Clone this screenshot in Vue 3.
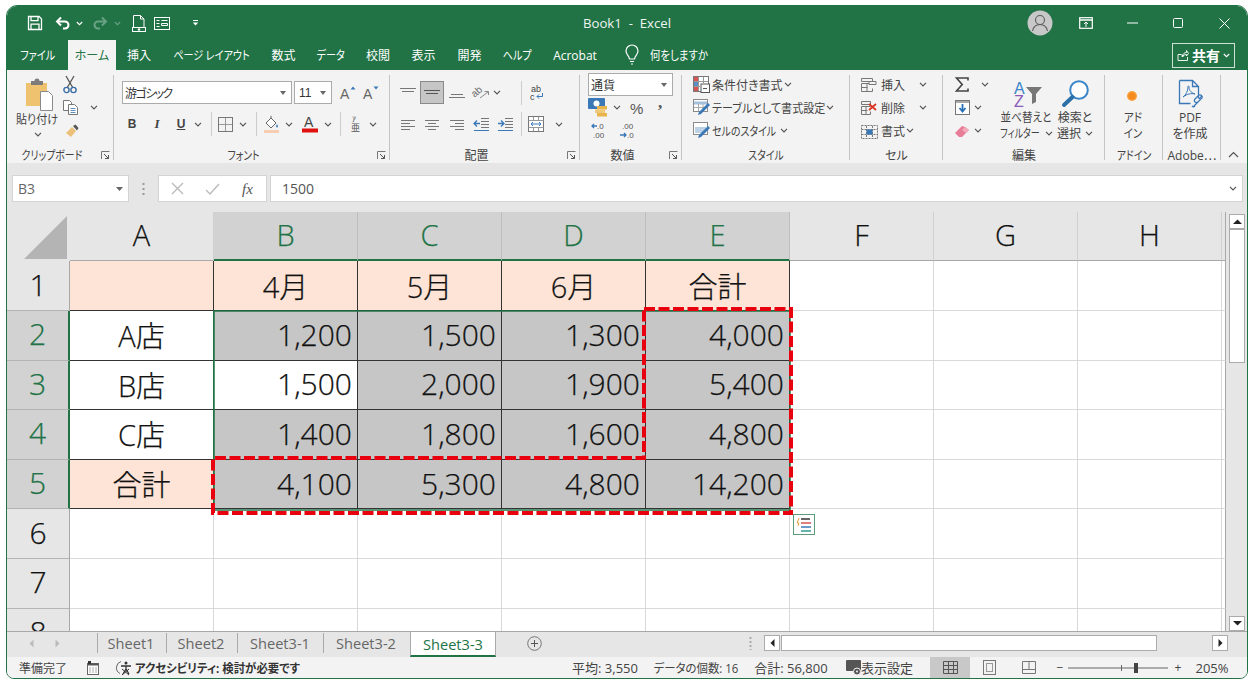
<script setup>
import { h } from 'vue'

const ln = (arr, c = '#777') => arr.map(([a, b, y]) => `<path d="M${a} ${y + 0.5}H${b}" stroke="${c}" fill="none"/>`).join('')
const T = (x, y, s, t, c = '#555', extra = '') => `<text x="${x}" y="${y}" font-size="${s}" fill="${c}" font-family="Liberation Sans, sans-serif" ${extra}>${t}</text>`
const blue = '#3b78b8'
const icons = {
  save: [16, 16, '<path d="M1.5 1.5h10.6l2.4 2.4v10.6h-13z M4 1.5v4.2h7V1.5 M4 14.5V9.2h8v5.3" fill="none" stroke="#fff" stroke-width="1.3"/>'],
  undo: [16, 14, '<path d="M6 1.5 2 5.5l4 4" fill="none" stroke="#fff" stroke-width="2"/><path d="M2.5 5.5H10a3.4 3.4 0 0 1 0 7H8" fill="none" stroke="#fff" stroke-width="2"/>'],
  redo: [16, 14, '<path d="M10 1.5l4 4-4 4" fill="none" stroke="#68a184" stroke-width="2"/><path d="M13.5 5.5H6a3.4 3.4 0 0 0 0 7h2" fill="none" stroke="#68a184" stroke-width="2"/>'],
  chW: [7, 5, '<path d="M.8 1l2.7 2.7L6.2 1" fill="none" stroke="#fff" stroke-width="1.1"/>'],
  chD: [7, 5, '<path d="M.8 1l2.7 2.7L6.2 1" fill="none" stroke="#68a184" stroke-width="1.1"/>'],
  ch: [8, 5, '<path d="M1 .8l3 3 3-3" fill="none" stroke="#555" stroke-width="1.2"/>'],
  prev: [14, 17, '<path d="M1.5 12V.5h7l3.5 3.5v8M8.5.5v3.5H12" fill="none" stroke="#fff"/><rect x=".5" y="12.5" width="13" height="4" fill="none" stroke="#fff"/><circle cx="7" cy="14.5" r="1.2" fill="#fff"/>'],
  form: [16, 13, '<rect x=".5" y=".5" width="15" height="12" fill="none" stroke="#fff"/><path d="M2.5 3.5h3M7.5 3.5h6M2.5 6.5h3M7.5 6.5h6v2h-6zM2.5 9.5h3" stroke="#fff" fill="none"/>'],
  cust: [7, 6, '<path d="M1 .5h5" stroke="#fff"/><path d="M.8 2.5h5.4L3.5 5.5z" fill="#fff"/>'],
  paste: [29, 33, '<rect x="1" y="5" width="21" height="23" fill="#efc26f"/><path d="M6 5V3h3.5a2.5 2.5 0 0 1 5 0H18v4H6z" fill="#7c7c7c"/><path d="M15.5 13.5h8l4 4v15h-12z" fill="#fff" stroke="#8a8a8a"/>'],
  cut: [14, 19, '<path d="M3 1l7 12M11 1L4 13" stroke="#555" stroke-width="1.3" fill="none"/><circle cx="3.5" cy="15" r="2.6" fill="none" stroke="#3a6ea5" stroke-width="1.4"/><circle cx="10.5" cy="15" r="2.6" fill="none" stroke="#3a6ea5" stroke-width="1.4"/>'],
  copy: [15, 15, '<path d="M.5.5h6l2 2v8h-8z" fill="#fff" stroke="#777"/><path d="M5.5 4.5h6l3 3v7h-9z" fill="#fff" stroke="#777"/><path d="M7.5 8.5h5M7.5 10.5h5M7.5 12.5h5" stroke="#5f8fc0"/>'],
  brush: [15, 14, '<path d="M1 9l6-6 4 4-5 6z" fill="#ecc078"/><path d="M8 2l2.5-1.5L13.5 4 12 6.5z" fill="#555"/>'],
  launch: [9, 9, '<path d="M.5 8V.5H8.5" fill="none" stroke="#777"/><path d="M3 3l4.5 4.5M4 7.5h3.5V4" fill="none" stroke="#555"/>'],
  grow: [17, 14, T(1, 13, 14, 'A', '#666') + `<path d="M11.5 3.5l2.5-3 2.5 3z" fill="${blue}"/>`],
  shrink: [17, 14, T(1, 13, 14, 'A', '#666') + `<path d="M11.5.5h5l-2.500 3z" fill="${blue}"/>`],
  border: [15, 15, '<rect x=".5" y=".5" width="14" height="14" fill="none" stroke="#777"/><path d="M7.5 1v13M1 7.5h13" stroke="#999"/>'],
  fill: [16, 18, '<path d="M2 8l5-5 5 5-5 5z" fill="#fff" stroke="#666"/><path d="M7 3V.8" stroke="#666"/><path d="M13 9c1.5 2 1.5 3.5 0 3.5s-1.5-1.5 0-3.5z" fill="#5b8fc4"/><rect y="15" width="15" height="3" fill="#f7cdb2"/>'],
  fcolor: [16, 18, T(2, 12, 14, 'A', '#444') + '<rect y="13.5" width="16" height="4" fill="#e01010"/>'],
  phon: [9, 18, T(1, 7, 8, 'ｱ', '#555') + '<text x="0" y="16" font-size="9" fill="#555" font-family="Noto Sans CJK JP">亜</text>'],
  vsep: [1, 24, '<path d="M.5 0V24" stroke="#ccc"/>'],
  atop: [16, 12, ln([[0, 16, 1], [2, 14, 4]])],
  amid: [16, 8, ln([[0, 16, 1], [2, 14, 4]], '#555')],
  abot: [16, 12, ln([[2, 14, 7], [0, 16, 10]])],
  aleft: [14, 11, ln([[0, 14, 1], [0, 9, 4], [0, 14, 7], [0, 9, 10]])],
  acen: [14, 11, ln([[0, 14, 1], [3, 11, 4], [0, 14, 7], [3, 11, 10]])],
  arig: [14, 11, ln([[0, 14, 1], [5, 14, 4], [0, 14, 7], [5, 14, 10]])],
  orient: [18, 16, T(0, 10, 10, 'ab', '#666', 'transform="rotate(-40 5 8)"') + `<path d="M8 13l8-6M12.5 6.5h4v3.5" fill="none" stroke="#888"/>`],
  wrap: [15, 16, T(2, 7, 9, 'ab', '#444') + T(1, 15, 9, 'c', '#444') + `<path d="M13.5 8v3.5H8M10 9.5l-2 2 2 2" fill="none" stroke="${blue}"/>`],
  inddec: [15, 13, `<path d="M0 5.5h6M3 2.5l-3 3 3 3" fill="none" stroke="${blue}" stroke-width="1.3"/>` + ln([[7, 15, 0], [7, 15, 3], [7, 15, 6], [7, 15, 9]]) + `<path d="M0 12.5h15" stroke="${blue}"/>`],
  indinc: [15, 13, `<path d="M0 5.5h6M3 2.5l3 3-3 3" fill="none" stroke="${blue}" stroke-width="1.3"/>` + ln([[7, 15, 0], [7, 15, 3], [7, 15, 6], [7, 15, 9]]) + `<path d="M0 12.5h15" stroke="${blue}"/>`],
  merge: [16, 16, `<rect x=".5" y=".5" width="15" height="15" fill="#fff" stroke="#777"/><path d="M.5 4.5h15M.5 11.5h15M5.5 1v3M10.5 1v3M5.5 12v3M10.5 12v3" stroke="#999"/><path d="M3 8h10M5 6L3 8l2 2M11 6l2 2-2 2" fill="none" stroke="${blue}"/>`],
  money: [20, 19, `<rect width="17" height="11" rx="1" fill="${blue}"/><circle cx="8.5" cy="5.5" r="3" fill="#fff"/><rect x="9" y="8" width="10" height="3.5" fill="#e9b44c"/><rect x="7" y="11.5" width="10" height="3.5" fill="#f0c97a"/><rect x="9" y="15" width="10" height="3.5" fill="#e9b44c"/>`],
  pct: [14, 14, '<text x="0" y="12.5" font-size="15" fill="#555" font-family="Liberation Sans">%</text>'],
  comma: [6, 9, '<text x="0" y="5" font-size="17" font-weight="700" fill="#555" font-family="Liberation Serif">,</text>'],
  decinc: [15, 18, T(6, 7, 8, '.0', '#555') + T(2, 16, 8, '.00', '#555') + `<path d="M6 4H1M3 2 1 4l2 2" fill="none" stroke="${blue}" stroke-width="1.3"/>`],
  decdec: [15, 18, T(4, 7, 8, '.00', '#555') + T(9, 16, 8, '.0', '#555') + `<path d="M2 13h6M6 11l2 2-2 2" fill="none" stroke="${blue}" stroke-width="1.3"/>`],
  cond: [17, 17, '<rect x=".5" y=".5" width="15" height="15" fill="#fff" stroke="#777"/><rect x="1" y="1" width="4" height="4" fill="#d9534f"/><rect x="1" y="6" width="4" height="4" fill="#5b8fc4"/><rect x="1" y="11" width="4" height="4" fill="#d9534f"/><path d="M5.5 1v14M10.5 1v6M1 5.5h14M1 10.5h6" stroke="#999"/><rect x="8" y="8" width="8.5" height="8.5" fill="#fff" stroke="#555"/><path d="M10 12.5h4" stroke="#555"/>'],
  tablef: [19, 17, `<rect x=".5" y=".5" width="14" height="12" fill="#fff" stroke="#8a8a8a"/><path d="M1 4h13" stroke="#a3bfdc" stroke-width="3"/><path d="M5.5 5v7M10 5v7M1 8.5h13" stroke="#aaa"/><path d="M5 16l3-1 9-9-2-2-9 9z" fill="${blue}"/>`],
  cellst: [19, 17, `<rect x=".5" y=".5" width="14" height="12" fill="#fff" stroke="#8a8a8a"/><rect x="2" y="5" width="11" height="6" fill="#bcd0e6"/><path d="M5 16l3-1 9-9-2-2-9 9z" fill="${blue}"/>`],
  cins: [16, 14, '<path d="M.5.5h11v3h-11zM.5 5.5h11M.5 5.5v8h11v-3M.5 9.5h6M6 5.5v8" fill="none" stroke="#777"/><path d="M8 3.5h7v3H8z" fill="#f3f3f3" stroke="#777"/>'],
  cdel: [16, 14, '<path d="M.5.5h9v3h-9zM.5 5.5h9M.5 5.5v8h9v-3M.5 9.5h6M5 5.5v8" fill="none" stroke="#777"/><path d="M8 3l7 6M15 3L8 9" stroke="#d9331f" stroke-width="1.7"/>'],
  cfmt: [17, 16, `<path d="M.5 2.5h16v13H.5zM.5 6.5h16M.5 11.5h16M5.5 3v12M11.5 3v12" fill="none" stroke="#777" stroke-dasharray="2 1"/><rect x="5.5" y="6.5" width="6" height="5" fill="${blue}"/>`],
  sigma: [14, 15, '<path d="M13 3.5V1H1.5l5.7 6.5L1.5 14H13v-2.5" fill="none" stroke="#444" stroke-width="1.6"/>'],
  fdown: [15, 15, `<rect x=".5" y=".5" width="14" height="14" fill="#fff" stroke="#777"/><path d="M1 2h13" stroke="#aaa" stroke-width="2"/><path d="M7.5 4v7M4.5 8l3 3.5 3-3.5" fill="none" stroke="#2a70b8" stroke-width="1.8"/>`],
  eraser: [15, 12, '<path d="M0 8l7-7 3 1 4 3-7 7H4z" fill="#e77d96"/><path d="M10 2l4 3-3 3-4-3z" fill="#f2a9bb"/>'],
  sort: [30, 26, '<text x="1" y="12" font-size="16" fill="#3a86c8" font-family="Liberation Sans">A</text><text x="1" y="25" font-size="16" fill="#8a5bb8" font-family="Liberation Sans">Z</text><path d="M13 5h16l-6 7v8l-4 2V12z" fill="#777"/>'],
  find: [27, 27, '<circle cx="17" cy="10" r="8.8" fill="#fff" stroke="#3a86c8" stroke-width="2"/><path d="M10.5 17 2 25" stroke="#2a6fa8" stroke-width="4" stroke-linecap="round"/>'],
  dot: [16, 16, '<circle cx="8" cy="8" r="5" fill="#f9a13a"/><circle cx="8" cy="8" r="3.5" fill="#f58a1f"/>'],
  pdf: [29, 29, `<path d="M2.5 1.5h13l6 6v12M21.5 7.5h-6v-6M2.5 1.5v23h11" fill="none" stroke="${blue}" stroke-width="1.3"/><path d="M6 18c3-2 5-6 5-10 0-2 1-1 1 0 0 4 3 6 6 7-4-1-8 0-12 3z" fill="none" stroke="${blue}"/><path d="M17 27l8-8a2.3 2.3 0 0 0-3-3l-4 4a2 2 0 0 0 3 3" fill="none" stroke="${blue}" stroke-width="1.3"/><path d="M22 20l3-3M15 27a2.2 2.2 0 0 0 3 0" fill="none" stroke="${blue}" stroke-width="1.3"/>`],
  up: [11, 7, '<path d="M1 6l4.5-4.5L10 6" fill="none" stroke="#555" stroke-width="1.2"/>'],
  bulb: [14, 20, '<path d="M4.5 14c0-3-3.5-4-3.5-8a6 6 0 0 1 12 0c0 4-3.5 5-3.5 8z M5 16.5h4M6 19h2" fill="none" stroke="#fff" stroke-width="1.2"/>'],
  avatar: [26, 26, '<circle cx="13" cy="13" r="12.5" fill="#c8c8c8"/><circle cx="13" cy="10" r="4.5" fill="none" stroke="#5a5a5a" stroke-width="1.1"/><path d="M5.5 21c1-5 4-6.5 7.5-6.5s6.500 1.500 7.500 6.500" fill="none" stroke="#5a5a5a" stroke-width="1.1"/>'],
  rdisp: [14, 12, '<rect x=".7" y=".7" width="12.600" height="10.600" fill="none" stroke="#fff" stroke-width="1.2"/><path d="M1 3h12" stroke="#fff" stroke-width="1.5"/><path d="M7 10V5M5 7l2-2 2 2" fill="none" stroke="#fff"/>'],
  min: [11, 2, '<path d="M0 1h11" stroke="#fff"/>'],
  max: [10, 10, '<rect x=".5" y=".5" width="9" height="9" rx="1" fill="none" stroke="#fff"/>'],
  close: [11, 11, '<path d="M.5.5l10 10M10.500.5l-10 10" stroke="#fff"/>'],
  shr: [12, 12, '<path d="M1 5.500v6h9.500V8M1 5.500h3l2 1.500h1M5 8c.5-3 2.500-4.500 4.500-4.500V1.500l2 3-2 2.500V5.500C7.500 5.500 6 6.500 5 8z" fill="none" stroke="#fff" stroke-width=".9"/>'],
  navl: [5, 9, '<path d="M4.500.5l-4 4 4 4z" fill="#bbb"/>'],
  navr: [5, 9, '<path d="M.5.5l4 4-4 4z" fill="#bbb"/>'],
  plus: [15, 15, '<circle cx="7.500" cy="7.500" r="6.800" fill="none" stroke="#777"/><path d="M4 7.500h7M7.500 4v7" stroke="#555"/>'],
  grip: [3, 14, '<path d="M1.500 1v2M1.500 5v2M1.500 9v2M1.500 13v1" stroke="#aaa" stroke-width="2"/>'],
  tl: [5, 8, '<path d="M4.500 0 .5 4l4 4z" fill="#222"/>'],
  tr: [5, 8, '<path d="M.5 0l4 4-4 4z" fill="#222"/>'],
  tu: [9, 5, '<path d="M0 5l4.500-4.500L9 5z" fill="#222"/>'],
  td: [9, 5, '<path d="M0 0l4.500 4.500L9 0z" fill="#222"/>'],
  macro: [12, 14, '<rect x=".5" y="2.500" width="11" height="11" fill="#fff" stroke="#666"/><path d="M1 3.500h10" stroke="#555" stroke-width="2"/><path d="M2.500 7h1M5.500 7h1M8.500 7h1M2.500 9h1M5.500 9h1M8.500 9h1M2.500 11h1M5.500 11h1M8.500 11h1" stroke="#555"/><rect x="1" y="0" width="3" height="3" fill="#333"/>'],
  a11y: [18, 16, '<path d="M5 1.500a6.500 6.500 0 0 0-1 12" fill="none" stroke="#666"/><circle cx="10" cy="3" r="1.500" fill="#333"/><path d="M5 6h10M10 6v3l-3 5M10 9l3 5" fill="none" stroke="#333" stroke-width="1.300"/><path d="M6 9l7 6M13 9l-7 6" stroke="#333"/>'],
  dset: [16, 16, '<rect width="15" height="11" rx="1" fill="#555"/><circle cx="11" cy="11.500" r="3.500" fill="#555" stroke="#f3f3f3"/><circle cx="11" cy="11.500" r="1" fill="#f3f3f3"/>'],
  vnorm: [15, 13, '<path d="M.5.500h14v12H.500zM.500 4.500h14M.500 8.500h14M5.500 1v11M10.500 1v11" fill="none" stroke="#555"/>'],
  vpage: [13, 15, '<rect x=".5" y=".5" width="12" height="14" fill="none" stroke="#777"/><rect x="3.500" y="3.500" width="6" height="8" fill="none" stroke="#999"/>'],
  vbreak: [14, 13, '<path d="M.500.500h13v12H.500zM.500 8.500h13M7 .5v8" fill="none" stroke="#777"/>'],
  slider: [100, 12, '<path d="M0 6h100" stroke="#666"/><path d="M53.500 3v6" stroke="#666"/><rect x="66" y="1" width="4" height="10" fill="#444"/>'],
  fx: [16, 16, '<text x="1" y="13" font-size="15" font-style="italic" fill="#555" font-family="Liberation Serif">fx</text>'],
  xx: [13, 13, '<path d="M1 1l11 11M12 1 1 12" stroke="#bbb" stroke-width="1.400"/>'],
  ok: [15, 12, '<path d="M1 7l4 4 9-10" fill="none" stroke="#bbb" stroke-width="1.400"/>'],
  dots: [3, 14, '<path d="M1.500 1v2M1.500 6v2M1.500 11v2" stroke="#999" stroke-width="2"/>'],
  drop: [7, 4, '<path d="M0 0h7L3.500 4z" fill="#666"/>']
}
const Ico = (p) => {
  const d = icons[p.n]
  return h('svg', { class: 'ico', width: d[0], height: d[1], viewBox: `0 0 ${d[0]} ${d[1]}`, innerHTML: d[2] })
}
Ico.props = ['n']

// Places a run of items along a row: each item is [centre, width, content, class].
// Content starting with @ names an icon. Margins are derived from the centres.
const R = (origin, list) => {
  let right = origin
  return list.map(([c, w, x, cls]) => {
    const left = c - w / 2
    const it = { s: { marginLeft: left - right + 'px', width: w + 'px' }, c: cls || '' }
    if (x[0] === '@') it.i = x.slice(1)
    else it.t = x
    right = left + w
    return it
  })
}

const qat = [[35, 16, '@save'], [63, 16, '@undo'], [79, 7, '@chW'], [100, 16, '@redo'], [117, 7, '@chD'], [139, 14, '@prev'], [162, 16, '@form'], [195, 7, '@cust']]
const menu = [['ファイル', 61, 'nk'], ['ホーム', 48, 'on'], ['挿入', 46], ['ページ レイアウト', 99, 'nk'], ['数式', 45], ['データ', 50, 'nk'], ['校閲', 44], ['表示', 47], ['開発', 45], ['ヘルプ', 50, 'nk'], ['Acrobat', 66]]

const r = (hh, items) => ({ h: hh, items })
const groups = [
  { label: 'クリップボード', w: 107, lc: true, nk: true, cols: [
    { x: 7, w: 55, pt: 5, rows: [r(33, [[39, 29, '@paste']]), r(16, [[37, 46, '貼り付け', 's92']]), r(14, [[38, 8, '@ch']])] },
    { x: 62, w: 44, rows: [r(23, [[70, 14, '@cut']]), r(23, [[70, 15, '@copy'], [94, 8, '@ch']]), r(23, [[72, 15, '@brush']])] }
  ] },
  { label: 'フォント', w: 276, lc: true, nk: true, cols: [
    { x: 114, w: 275, pt: 8, rows: [
      r(23, [[207, 170, '游ゴシック', 'combo tight'], [313, 38, '11', 'combo size'], [347, 17, '@grow'], [370, 17, '@shrink']]),
      r(24, [[132, 14, 'B', 'bB'], [157, 14, 'I', 'bI'], [181, 14, 'U', 'bU'], [198, 8, '@ch'], [211, 1, '@vsep'], [225, 15, '@border'], [243, 8, '@ch'], [256, 1, '@vsep'], [272, 16, '@fill'], [289, 8, '@ch'], [310, 16, '@fcolor'], [328, 8, '@ch'], [340, 1, '@vsep'], [355, 9, '@phon'], [373, 8, '@ch']])
    ] }
  ], rowGap: true },
  { label: '配置', w: 190, lc: true, cols: [
    { x: 390, w: 189, pt: 8, rows: [
      r(23, [[408, 16, '@atop'], [432, 24, '@amid', 'act'], [457, 16, '@abot'], [481, 18, '@orient'], [497, 8, '@ch'], [521, 1, '@vsep'], [536, 15, '@wrap']]),
      r(24, [[408, 14, '@aleft'], [432, 14, '@acen'], [457, 14, '@arig'], [481, 15, '@inddec'], [505, 15, '@indinc'], [521, 1, '@vsep'], [536, 16, '@merge'], [559, 8, '@ch']])
    ] }
  ], rowGap: true },
  { label: '数値', w: 102, lc: true, cols: [
    { x: 580, w: 101, rows: [
      r(23, [[630.5, 85, '通貨', 'combo']]),
      r(23, [[598, 20, '@money'], [617, 8, '@ch'], [637, 14, '@pct'], [661, 6, '@comma']]),
      r(23, [[598, 15, '@decinc'], [625, 15, '@decdec']])
    ] }
  ] },
  { label: 'スタイル', w: 168, nk: true, cols: [
    { x: 682, w: 167, rows: [
      r(23, [[701, 17, '@cond'], [747, 70, '条件付き書式', 'tl'], [788, 8, '@ch']]),
      r(23, [[702, 19, '@tablef'], [768.5, 113, 'テーブルとして書式設定', 'tl s92'], [830, 8, '@ch']]),
      r(23, [[702, 19, '@cellst'], [744, 64, 'セルのスタイル', 'tl s83'], [784, 8, '@ch']])
    ] }
  ] },
  { label: 'セル', w: 93, cols: [
    { x: 850, w: 92, rows: [
      r(23, [[869, 16, '@cins'], [893, 24, '挿入'], [923, 8, '@ch']]),
      r(23, [[869, 16, '@cdel'], [893, 24, '削除'], [923, 8, '@ch']]),
      r(23, [[869, 17, '@cfmt'], [893, 24, '書式'], [910, 8, '@ch']])
    ] }
  ] },
  { label: '編集', w: 162, cols: [
    { x: 943, w: 55, rows: [
      r(23, [[962, 14, '@sigma'], [985, 8, '@ch']]),
      r(23, [[962, 15, '@fdown'], [978, 8, '@ch']]),
      r(23, [[962, 15, '@eraser'], [978, 8, '@ch']])
    ] },
    { x: 998, w: 54, pt: 7, rows: [r(29, [[1028, 30, '@sort']]), r(16, [[1026, 52, '並べ替えと', 's88']]), r(16, [[1020, 44, 'フィルター', 's75'], [1049, 8, '@ch']])] },
    { x: 1052, w: 52, pt: 5, rows: [r(31, [[1075, 27, '@find']]), r(16, [[1075, 36, '検索と']]), r(16, [[1069, 24, '選択'], [1089, 8, '@ch']])] }
  ] },
  { label: 'アドイン', w: 58, nk: true, cols: [
    { x: 1105, w: 57, pt: 10, rows: [r(26, [[1132, 16, '@dot']]), r(16, [[1133, 30, 'アド', 's88']]), r(16, [[1133, 30, 'イン', 's88']])] }
  ] },
  { label: 'Adobe⋯', w: 58, cols: [
    { x: 1163, w: 57, pt: 5, rows: [r(31, [[1191, 29, '@pdf']]), r(16, [[1190, 30, 'PDF']]), r(16, [[1190, 40, 'を作成']])] }
  ] }
]

const colNames = ['A', 'B', 'C', 'D', 'E', 'F', 'G', 'H']
const rows = [
  ['', '4月', '5月', '6月', '合計'],
  ['A店', '1,200', '1,500', '1,300', '4,000'],
  ['B店', '1,500', '2,000', '1,900', '5,400'],
  ['C店', '1,400', '1,800', '1,600', '4,800'],
  ['合計', '4,100', '5,300', '4,800', '14,200'],
  [], [], []
]
const cellClass = (ri, ci) => {
  const c = []
  const inTable = ri < 5 && ci < 5
  if (inTable) c.push('tb')
  if (ri === 0 && inTable) c.push('peach', 'ctr')
  else if (ri === 4 && ci === 0) c.push('peach', 'ctr')
  else if (inTable && ci === 0) c.push('ctr')
  else if (inTable && !(ri === 2 && ci === 1)) c.push('sel')
  if (inTable && ri > 0 && ci > 0) c.push('amount')
  if (ri === 0 && ci === 0) c.push('a1')
  if (ri > 0 && ri < 5 && ci === 0) c.push('ledge')
  return c
}

const tabsRow = [[31, 5, '@navl'], [57, 5, '@navr'], [97, 1, '', 'ts'], [131, 60, 'Sheet1', 'st'], [166, 1, '', 'ts'], [201, 60, 'Sheet2', 'st'], [237, 1, '', 'ts'], [280, 74, 'Sheet3-1', 'st'], [323, 1, '', 'ts'], [366, 74, 'Sheet3-2', 'st'], [453, 86, 'Sheet3-3', 'st act2'], [534, 15, '@plus'], [750, 3, '@grip'], [772, 16, '@tl', 'sbtn'], [969, 376, '', 'hthumb'], [1220, 16, '@tr', 'sbtn']]
const statusRow = [[43, 50, '準備完了'], [93, 12, '@macro'], [125, 18, '@a11y'], [217, 164, 'アクセシビリティ: 検討が必要です', 'bold tl s95'], [605, 70, '平均: 3,550', 'w13'], [696, 90, 'データの個数: 16', 's95'], [791, 80, '合計: 56,800', 'w13'], [854, 16, '@dset'], [887, 50, '表示設定', 'w13'], [950, 40, '@vnorm', 'vact'], [989, 13, '@vpage'], [1029, 14, '@vbreak'], [1060, 8, '−'], [1118, 100, '@slider'], [1178, 10, '+'], [1212, 34, '205%', 'w13']]
</script>

<template>
  <div class="win">
    <header class="title">
      <span v-for="(it, n) in R(7, qat)" :key="n" class="it" :style="it.s"><Ico :n="it.i" /></span>
      <span class="docname">Book1&nbsp; -&nbsp; Excel</span>
      <span class="winctl">
        <span class="wc"><Ico n="avatar" /></span>
        <span class="wc"><Ico n="rdisp" /></span>
        <span class="wc"><Ico n="min" /></span>
        <span class="wc"><Ico n="max" /></span>
        <span class="wc"><Ico n="close" /></span>
      </span>
    </header>

    <nav class="menu">
      <span v-for="m in menu" :key="m[0]" class="mi" :class="m[2]" :style="{ width: m[1] + 'px' }"><span class="ml">{{ m[0] }}</span></span>
      <span class="bulb"><Ico n="bulb" /></span>
      <span class="tell">何をしますか</span>
      <span class="share"><Ico n="shr" /><b>共有</b><Ico n="chW" /></span>
    </nav>

    <section class="ribbon">
      <div v-for="g in groups" :key="g.label" class="grp" :style="{ width: g.w + 'px' }">
        <div class="gbody">
          <div v-for="(col, ci) in g.cols" :key="ci" class="gcol" :class="{ gapped: g.rowGap }" :style="{ width: col.w + 'px', paddingTop: (col.pt || 0) + 'px' }">
            <div v-for="(row, ri) in col.rows" :key="ri" class="grow" :style="{ height: row.h + 'px' }">
              <span v-for="(it, n) in R(col.x, row.items)" :key="n" class="it" :class="it.c" :style="it.s"><Ico v-if="it.i" :n="it.i" /><template v-else>{{ it.t }}</template></span>
            </div>
          </div>
        </div>
        <div class="glabel">
          <span class="gtext" :class="{ s82: g.nk }">{{ g.label }}</span>
          <span v-if="g.lc" class="launch"><Ico n="launch" /></span>
        </div>
      </div>
      <span class="collapse"><Ico n="up" /></span>
    </section>

    <section class="band">
      <div class="fbar">
        <div class="namebox"><span>B3</span><Ico n="drop" /></div>
        <span class="grip"><Ico n="dots" /></span>
        <div class="fbtns"><Ico n="xx" /><Ico n="ok" /><Ico n="fx" /></div>
        <div class="finput"><span>1500</span><Ico n="ch" /></div>
      </div>
    </section>

    <section class="work">
      <div class="sheet">
        <div class="corner"><i class="tri"></i></div>
        <div v-for="(c, i) in colNames" :key="c" class="ch" :class="{ csel: i > 0 && i < 5 }">{{ c }}</div>
        <div class="ch extra"></div>
        <template v-for="(row, ri) in rows" :key="ri">
          <div class="rh" :class="{ rsel: ri > 0 && ri < 5 }">{{ ri + 1 }}</div>
          <div v-for="ci in 8" :key="ci" class="cell" :class="cellClass(ri, ci - 1)">{{ row[ci - 1] }}</div>
          <div class="cell extra"></div>
        </template>
        <svg class="ants" viewBox="7 212 1219 419" width="1219" height="419">
          <rect x="214" y="311" width="576" height="199" fill="none" stroke="#217346" stroke-width="1.5" />
          <path d="M644 309H791V513H213V458H644Z" fill="none" stroke="#e8000f" stroke-width="4" stroke-dasharray="11 3.500" />
          <rect x="793.500" y="514.500" width="21" height="20" fill="#fff" stroke="#5f9a7b" />
          <path d="M799 518l-2 5h2l-1 3" fill="none" stroke="#e8a33d" />
          <path d="M801 519h9" stroke="#333" stroke-width="1.500" />
          <path d="M801 523h10" stroke="#d9534f" stroke-width="1.500" />
          <path d="M801 527h10" stroke="#3b78b8" stroke-width="1.500" />
          <path d="M801 531h10" stroke="#2f9e8f" stroke-width="1.500" />
        </svg>
      </div>
      <aside class="vsb">
        <span class="vbtn"><Ico n="tu" /></span>
        <span class="vthumb"></span>
        <span class="vrest"></span>
        <span class="vbtn"><Ico n="td" /></span>
      </aside>
    </section>

    <section class="tabs">
      <span v-for="(it, n) in R(7, tabsRow)" :key="n" class="it" :class="it.c" :style="it.s"><Ico v-if="it.i" :n="it.i" /><template v-else>{{ it.t }}</template></span>
    </section>

    <footer class="status">
      <span v-for="(it, n) in R(7, statusRow)" :key="n" class="it" :class="it.c" :style="it.s"><Ico v-if="it.i" :n="it.i" /><template v-else>{{ it.t }}</template></span>
    </footer>
  </div>
</template>

<style>
html, body { margin: 0; background: #fff; }
svg.ico { display: block; flex: none; overflow: visible; }
</style>

<style scoped>
.win {
  box-sizing: border-box;
  width: 1242px;
  height: 674px;
  margin: 5px 0 0 6px;
  border: 1px solid #217346;
  border-radius: 11px 11px 8px 8px;
  overflow: hidden;
  display: flex;
  flex-direction: column;
  font-family: "Open Sans", "Noto Sans CJK JP", sans-serif;
  font-feature-settings: "palt";
  color: #444;
  background: #f3f3f3;
}
.it { display: inline-flex; align-items: center; justify-content: center; flex: none; white-space: nowrap; }
.title { height: 34px; flex: none; background: #217346; display: flex; align-items: center; position: relative; color: #fff; }
.docname { position: absolute; left: 0; width: 1240px; text-align: center; font-size: 13.2px; color: #eef5f1; }
.winctl { position: absolute; right: 0; top: 0; height: 34px; display: flex; align-items: center; }
.wc { display: flex; justify-content: center; width: 46px; }
.menu { height: 30px; flex: none; background: #217346; display: flex; align-items: center; color: #fff; font-size: 12px; }
.mi { height: 30px; display: flex; align-items: center; justify-content: center; white-space: nowrap; }
.mi.on { background: #f3f3f3; color: #217346; }
.mi.nk .ml { display: inline-block; transform: scaleX(.84); }
.bulb { margin-left: 17px; }
.tell { margin-left: 11px; transform: scaleX(.87); transform-origin: left center; }
.share { margin-left: auto; margin-right: 12px; box-sizing: border-box; width: 63px; height: 25px; border: 1px solid #cfe0d7; display: flex; align-items: center; gap: 3px; padding-left: 4px; font-size: 14px; }
.share b { font-weight: 700; }
.ribbon { height: 93px; flex: none; box-sizing: border-box; padding-top: 3px; display: flex; background: #f3f3f3; font-size: 12px; color: #444; }
.grp { position: relative; display: flex; flex-direction: column; height: 90px; flex: none; }
.grp::after { content: ""; position: absolute; right: 0; top: 2px; bottom: 3px; width: 1px; background: #c4c4c4; }
.gbody { height: 74px; display: flex; }
.gcol { flex: none; }
.gapped .grow + .grow { margin-top: 8px; }
.grow { display: flex; align-items: center; }
.glabel { height: 16px; display: flex; align-items: center; }
.gtext { flex: 1; text-align: center; white-space: nowrap; font-size: 12px; }
.launch { width: 16px; display: flex; justify-content: center; margin-right: 1px; }
.collapse { align-self: flex-end; margin: 0 0 5px 7px; }
.s75 { transform: scaleX(.75); }
.s82 { transform: scaleX(.82); }
.s83 { transform: scaleX(.83); }
.s88 { transform: scaleX(.88); }
.s92 { transform: scaleX(.92); }
.s95 { transform: scaleX(.95); }
.tl { justify-content: flex-start; transform-origin: left center; }
.combo { position: relative; box-sizing: border-box; height: 23px; background: #fff; border: 1px solid #ababab; justify-content: flex-start; padding-left: 2px; color: #333; }
.combo::after { content: ""; position: absolute; right: 5px; top: 9px; border: 3px solid transparent; border-top: 4px solid #666; }
.tight { letter-spacing: -1.6px; }
.size { font-family: "Liberation Sans", sans-serif; padding-left: 4px; }
.bB { font: 700 12px "Liberation Sans", sans-serif; color: #444; }
.bI { font: italic 700 13px "Liberation Serif", serif; color: #444; }
.bU { font: 700 12px "Liberation Sans", sans-serif; color: #444; text-decoration: underline; }
.act { height: 23px; background: #c6c6c6; border: 1px solid #8a8a8a; box-sizing: border-box; }
.band { height: 49px; flex: none; box-sizing: border-box; padding-top: 12px; background: #e6e6e6; }
.fbar { display: flex; height: 27px; padding-left: 5px; }
.namebox { box-sizing: border-box; width: 117px; background: #fff; border: 1px solid #d4d4d4; display: flex; align-items: center; justify-content: space-between; padding: 0 5px; font-size: 14px; color: #666; }
.grip { width: 29px; display: flex; align-items: center; justify-content: center; }
.fbtns { box-sizing: border-box; width: 109px; background: #fff; border: 1px solid #d4d4d4; display: flex; align-items: center; gap: 21px; padding-left: 12px; }
.finput { box-sizing: border-box; width: 973px; margin-left: 3px; background: #fff; border: 1px solid #d4d4d4; display: flex; align-items: center; justify-content: space-between; padding: 0 5px 0 11px; font-size: 14px; color: #555; }
.work { height: 419px; flex: none; display: flex; background: #e6e6e6; }
.sheet {
  position: relative;
  width: 1219px;
  height: 419px;
  overflow: hidden;
  flex: none;
  display: grid;
  grid-template-columns: 63px repeat(8, 144px) 1fr;
  grid-template-rows: 49.4px repeat(8, 49.6px);
  background: #fff;
  font-family: "Open Sans", "Noto Sans CJK JP", sans-serif;
  font-size: 29px;
  font-weight: 300;
  color: #111;
  font-feature-settings: normal;
  -webkit-text-stroke: .25px currentColor;
}
.corner { background: #e6e6e6; position: relative; }
.tri { position: absolute; left: 17px; top: 4px; width: 43px; height: 43px; background: #b4b4b4; clip-path: polygon(100% 0, 100% 100%, 0 100%); }
.ch { box-sizing: border-box; background: #e6e6e6; border-right: 1px solid #d0d0d0; border-bottom: 1px solid #a8a8a8; display: flex; align-items: center; justify-content: center; padding-bottom: 3px; }
.ch.csel { background: #d2d2d2; color: #217346; border-bottom: 2px solid #217346; border-right-color: #bdbdbd; }
.ch.extra { border-right: 1px solid #a8a8a8; }
.rh { box-sizing: border-box; background: #e6e6e6; border-right: 1px solid #a8a8a8; border-bottom: 1px solid #b4b4b4; display: flex; align-items: center; justify-content: center; font-size: 30px; padding-bottom: 3px; }
.rh.rsel { background: #d2d2d2; color: #217346; border-right: 2px solid #217346; }
.cell { box-sizing: border-box; background: #fff; border-right: 1px solid #d9d9d9; border-bottom: 1px solid #d9d9d9; display: flex; align-items: center; justify-content: center; padding-bottom: 2px; }
.cell.extra { border-right: 1px solid #a8a8a8; }
.tb { border-right-color: #333; border-bottom-color: #333; }
.peach { background: #fde4d6; }
.sel { background: #c6c6c6; }
.amount { justify-content: flex-end; padding-right: 5px; font-size: 30px; }
.ledge { border-right-color: #217346; }
.ants { position: absolute; left: 0; top: 0; pointer-events: none; }
.vsb { box-sizing: border-box; width: 16px; margin-left: 3px; padding-top: 2px; display: flex; flex-direction: column; }
.vbtn { box-sizing: border-box; height: 15px; flex: none; background: #fff; border: 1px solid #ababab; display: flex; align-items: center; justify-content: center; }
.vthumb { box-sizing: border-box; height: 134px; background: #fff; border: 1px solid #ababab; flex: none; }
.vrest { flex: 1; }
.tabs { height: 26px; flex: none; background: #e6e6e6; display: flex; align-items: center; border-top: 1px solid #a8a8a8; box-sizing: border-box; font-size: 14.6px; color: #666; padding-bottom: 3px; }
.ts { height: 20px; background: #aaa; }
.st { height: 22px; }
.act2 { height: 25px; align-self: flex-start; box-sizing: border-box; background: #fff; color: #217346; border-left: 1px solid #aaa; border-right: 1px solid #aaa; border-bottom: 2px solid #217346; }
.sbtn { box-sizing: border-box; height: 16px; background: #fff; border: 1px solid #ababab; }
.hthumb { box-sizing: border-box; height: 16px; background: #fff; border: 1px solid #ababab; }
.status { height: 21px; flex: none; background: #f3f3f3; display: flex; align-items: center; font-size: 12px; color: #444; }
.w13 { font-size: 13px; }
.bold { font-weight: 700; color: #333; }
.vact { height: 21px; background: #c8c8c8; }
</style>
